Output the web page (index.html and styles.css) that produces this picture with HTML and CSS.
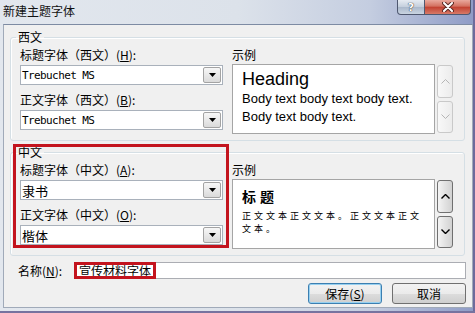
FILE: index.html
```html
<!DOCTYPE html>
<html lang="zh-CN">

<head>
  <meta charset="UTF-8">
  <title>新建主题字体</title>
  <link rel="stylesheet" href="styles.css">
</head>

<body>
  <div class="window">
    <div class="titlebar">
      <span class="title">新建主题字体</span>
      <div class="caption">
        <span class="cap-btn cap-help">?</span>
        <span class="cap-btn cap-close">
          <svg width="12" height="10" viewBox="0 0 12 10">
            <path d="M2 1L10 9M10 1L2 9" stroke="#5a2a24" stroke-width="4" stroke-linecap="round" />
            <path d="M2 1L10 9M10 1L2 9" stroke="#fff" stroke-width="2" stroke-linecap="round" />
          </svg>
        </span>
      </div>
    </div>

    <div class="client">
      <fieldset class="group">
        <legend>西文</legend>
        <div class="group-body">
          <div class="fields">
            <div class="field-label">标题字体（西文）(<u>H</u>):</div>
            <div class="combo">
              <span class="combo-value mono">Trebuchet MS</span>
              <span class="combo-btn"><svg width="7" height="4"><path d="M0 0h7L3.5 4z" fill="#000" /></svg></span>
            </div>
            <div class="field-label second">正文字体（西文）(<u>B</u>):</div>
            <div class="combo">
              <span class="combo-value mono">Trebuchet MS</span>
              <span class="combo-btn"><svg width="7" height="4"><path d="M0 0h7L3.5 4z" fill="#000" /></svg></span>
            </div>
          </div>
          <div class="preview">
            <div class="field-label">示例</div>
            <div class="preview-row">
              <div class="preview-box latin">
                <div class="sample-heading">Heading</div>
                <div class="sample-body">Body text body text body text.</div>
                <div class="sample-body">Body text body text.</div>
              </div>
              <div class="scroll">
                <span class="scroll-btn"><svg width="9" height="5"><path d="M0.5 4.5L4.5 0.5L8.5 4.5" stroke="#b5b5b5" fill="none" /></svg></span>
                <span class="scroll-btn"><svg width="9" height="5"><path d="M0.5 0.5L4.5 4.5L8.5 0.5" stroke="#b5b5b5" fill="none" /></svg></span>
              </div>
            </div>
          </div>
        </div>
      </fieldset>

      <fieldset class="group group-cjk">
        <legend>中文</legend>
        <div class="group-body">
          <div class="fields">
            <div class="field-label">标题字体（中文）(<u>A</u>):</div>
            <div class="combo">
              <span class="combo-value cjk-value">隶书</span>
              <span class="combo-btn"><svg width="7" height="4"><path d="M0 0h7L3.5 4z" fill="#000" /></svg></span>
            </div>
            <div class="field-label second">正文字体（中文）(<u>O</u>):</div>
            <div class="combo">
              <span class="combo-value cjk-value">楷体</span>
              <span class="combo-btn"><svg width="7" height="4"><path d="M0 0h7L3.5 4z" fill="#000" /></svg></span>
            </div>
          </div>
          <div class="preview">
            <div class="field-label">示例</div>
            <div class="preview-row">
              <div class="preview-box cjk">
                <div class="cjk-heading">标题</div>
                <div class="cjk-body">正文文本正文文本。正文文本正文<br>文本。</div>
              </div>
              <div class="scroll scroll-active">
                <span class="scroll-btn"><svg width="9" height="5"><path d="M0.5 4.5L4.5 0.5L8.5 4.5" stroke="#000" stroke-width="1.4" fill="none" /></svg></span>
                <span class="scroll-btn"><svg width="9" height="5"><path d="M0.5 0.5L4.5 4.5L8.5 0.5" stroke="#000" stroke-width="1.4" fill="none" /></svg></span>
              </div>
            </div>
          </div>
        </div>
      </fieldset>

      <div class="name-row">
        <span class="name-label">名称(<u>N</u>):</span>
        <div class="name-input"><span class="mark">宣传材料字体</span></div>
      </div>

      <div class="actions">
        <button class="btn btn-default">保存(<u>S</u>)</button>
        <button class="btn">取消</button>
      </div>

      <!-- 红色标注框 -->
      <div class="mark-box"></div>
    </div>
  </div>
</body>

</html>
```

FILE: styles.css
```css
body {
  margin: 0;
  font-family: "Noto Sans CJK SC", sans-serif;
  font-size: 12px;
  color: #000;
}

.window {
  width: 475px;
  height: 313px;
  box-sizing: border-box;
  padding: 0 2px 5px 3px;
  display: flex;
  flex-direction: column;
  background: linear-gradient(to right, #e2e7ee 0%, #dce2ea 50%, #c4cde0 78%, #8e9bc6 100%);
  box-shadow: inset 0 -2px #77739f, inset -2px 0 #6d6b9c;
}

/* 标题栏 */
.titlebar {
  height: 24px;
  margin: 0 -2px 0 -3px;
  padding: 0 4px 0 3px;
  display: flex;
  align-items: flex-start;
}

.title {
  padding-top: 4px;
  line-height: 14px;
  color: #111;
}

.caption {
  margin-left: auto;
  display: flex;
}

.cap-btn {
  height: 15px;
  box-sizing: border-box;
  border: 1px solid #4f5870;
  border-top: none;
  display: flex;
  align-items: center;
  justify-content: center;
}

.cap-help {
  width: 28px;
  border-radius: 0 0 0 4px;
  background: linear-gradient(#e6ebf2, #c3cedc 50%, #aab8cb 51%, #c9d4e1);
  color: #fff;
  font: bold 11px "DejaVu Sans", sans-serif;
  text-shadow: 0 0 1px #333, 0 0 1px #333;
}

.cap-close {
  width: 46px;
  border-left: none;
  border-radius: 0 0 4px 0;
  background: linear-gradient(#e9a99d, #d3705f 45%, #c2402f 50%, #d77a68);
}

/* 客户区 */
.client {
  flex: 1;
  position: relative;
  box-sizing: border-box;
  background: #f0f0f0;
  border: 1px solid #a0aab9;
  border-top-color: #7d8ba3;
}

.group {
  margin: 5px 0 0 6px;
  width: 455px;
  min-width: 0;
  box-sizing: border-box;
  border: 1px solid #d5dfe5;
  border-radius: 3px;
  padding: 4px 11px 6px 9px;
  box-shadow: inset 1px 1px #fff;
}

.group legend {
  padding: 0 2px;
  margin-left: -4px;
  line-height: 14px;
}

.group-cjk {
  margin-top: 4px;
}

.group-body {
  display: grid;
  grid-template-columns: 203px 221px;
  column-gap: 9px;
}

.field-label {
  line-height: 14px;
  height: 14px;
  white-space: nowrap;
}

.field-label.second {
  margin-top: 8px;
}

.combo {
  height: 20px;
  margin-top: 3px;
  box-sizing: border-box;
  border: 1px solid #a9b1bb;
  background: #fff;
  padding: 0 1px;
  display: flex;
  align-items: center;
  justify-content: space-between;
}

.mono {
  font-family: "DejaVu Sans Mono", monospace;
  font-size: 11px;
  letter-spacing: -0.6px;
}

.cjk-value {
  font-size: 13px;
}

.combo-btn {
  width: 18px;
  height: 16px;
  box-sizing: border-box;
  border: 1px solid #a3a3a3;
  border-radius: 2px;
  background: linear-gradient(#f7f7f7, #e9e9e9 50%, #dadada);
  display: flex;
  align-items: center;
  justify-content: center;
}

/* 示例 */
.preview-row {
  display: flex;
  gap: 2px;
  height: 70px;
  margin-top: 2px;
}

.preview-box {
  flex: 1;
  box-sizing: border-box;
  border: 1px solid #a5a5a5;
  background: #fff;
  padding: 3px 10px 0 9px;
  overflow: hidden;
}

.sample-heading {
  font-family: "Liberation Sans", sans-serif;
  font-size: 18px;
  line-height: 22px;
}

.sample-body {
  font-family: "Liberation Sans", sans-serif;
  font-size: 13px;
  line-height: 18px;
  white-space: nowrap;
}

.preview-box.cjk {
  padding-top: 7px;
}

.cjk-heading {
  font-size: 14px;
  font-weight: bold;
  line-height: 18px;
  letter-spacing: 4px;
}

.cjk-body {
  margin-top: 4px;
  font-size: 9px;
  line-height: 13px;
  letter-spacing: 3px;
  white-space: nowrap;
}

.scroll {
  width: 16px;
  padding: 1px 0;
  display: flex;
  flex-direction: column;
  gap: 3px;
}

.scroll-btn {
  flex: 1;
  border: 1px solid #c9c9c9;
  border-radius: 3px;
  background: linear-gradient(to right, #f8f8f8, #ececec);
  display: flex;
  align-items: center;
  justify-content: center;
}

.scroll-active .scroll-btn {
  border-color: #707070;
  background: linear-gradient(to right, #f4f4f4, #e2e2e2 50%, #d2d2d2);
}

/* 名称 */
.name-row {
  display: flex;
  align-items: center;
  margin: 6px 0 0 14px;
}

.name-label {
  width: 56px;
  line-height: 14px;
}

.name-input {
  width: 392px;
  height: 17px;
  box-sizing: border-box;
  border: 1px solid #abadb3;
  background: #fff;
  padding-left: 2px;
  display: flex;
  align-items: center;
}

.mark {
  height: 11px;
  line-height: 11px;
  padding: 0 2px;
  outline: 3px solid #c3141e;
}

/* 按钮 */
.actions {
  display: flex;
  justify-content: flex-end;
  gap: 10px;
  margin: 4px 6px 0 0;
}

.btn {
  width: 74px;
  height: 21px;
  box-sizing: border-box;
  padding: 0;
  border: 1px solid #707070;
  border-radius: 3px;
  background: linear-gradient(#f2f2f2, #ebebeb 50%, #dddddd 50%, #cfcfcf);
  font-family: "Noto Sans CJK SC", sans-serif;
  font-size: 12px;
  line-height: 14px;
  color: #000;
}

.btn-default {
  border-color: #3c7fb1;
  box-shadow: inset 0 0 0 1px #97d0f0;
}

.mark-box {
  position: absolute;
  left: 9px;
  top: 119px;
  width: 216px;
  height: 104px;
  box-sizing: border-box;
  border: 3px solid #c3141e;
}
```
